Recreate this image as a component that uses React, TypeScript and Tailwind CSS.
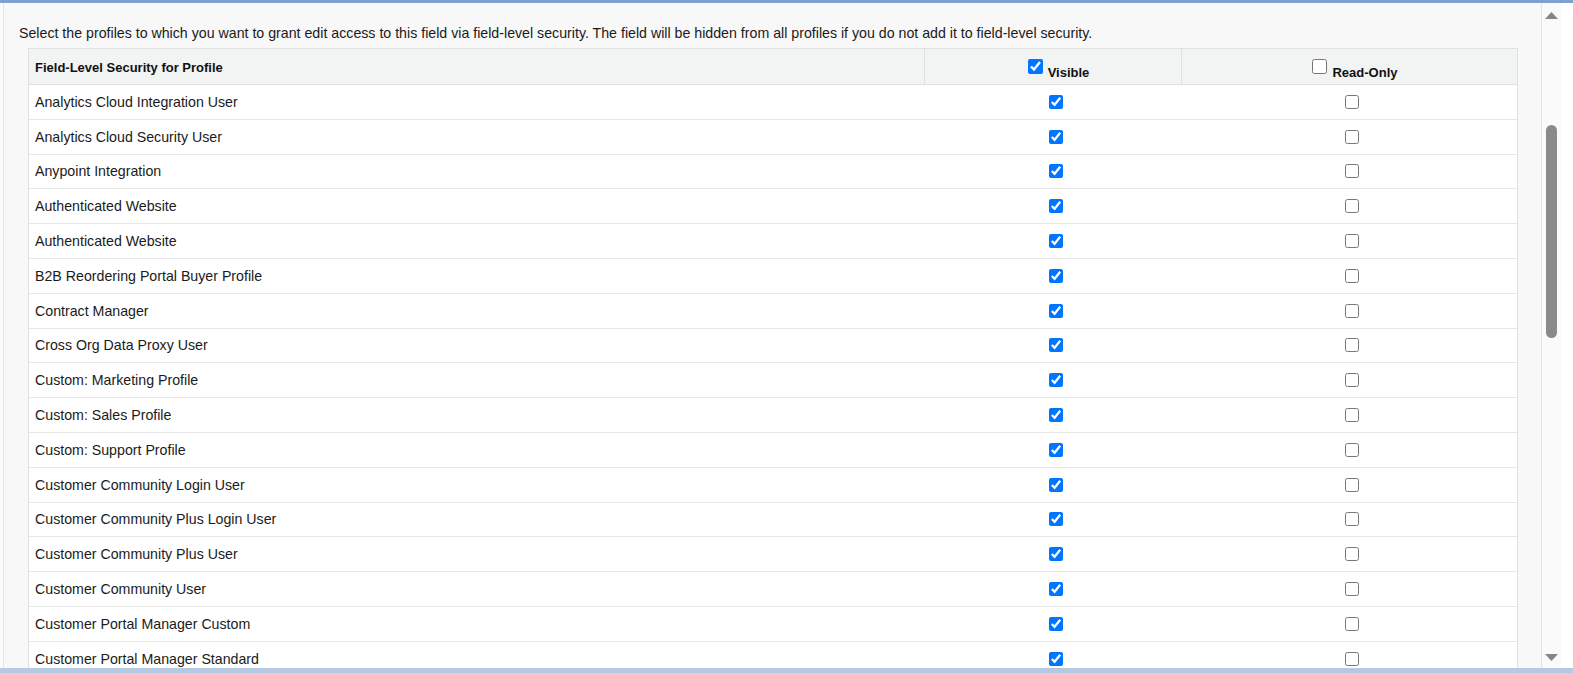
import React from "react";

const profiles = [
  "Analytics Cloud Integration User",
  "Analytics Cloud Security User",
  "Anypoint Integration",
  "Authenticated Website",
  "Authenticated Website",
  "B2B Reordering Portal Buyer Profile",
  "Contract Manager",
  "Cross Org Data Proxy User",
  "Custom: Marketing Profile",
  "Custom: Sales Profile",
  "Custom: Support Profile",
  "Customer Community Login User",
  "Customer Community Plus Login User",
  "Customer Community Plus User",
  "Customer Community User",
  "Customer Portal Manager Custom",
  "Customer Portal Manager Standard",
];

export default function App() {
  return (
    <div
      className="w-[1573px] h-[673px] bg-white flex flex-col overflow-hidden"
      style={{ fontFamily: '"Liberation Sans", Arial, sans-serif' }}
    >
      <div className="h-[3px] bg-[#7ea2cd] shrink-0" />
      <div className="flex flex-1 min-h-0">
        <div className="w-[3px] bg-[#fbfbfb] shrink-0" />
        <div className="flex-1 min-w-0 bg-[#f8f8f8] border-l border-r border-[#e4e4e4] overflow-hidden pt-[22px] pl-[15px] pr-[23px]">
          <p className="text-[14.2px] leading-[16px] text-[#1b1b1b] m-0 whitespace-nowrap">
            Select the profiles to which you want to grant edit access to this field via field-level security. The field will be hidden from all profiles if you do not add it to field-level security.
          </p>
          <div className="ml-[9px] mt-[7px] border border-[#e0e0e0] bg-white">
            <div className="flex h-[36px] bg-[#f2f3f3] border-b border-[#e0e0e0] text-[13px] font-bold text-[#111]">
              <div className="w-[896px] flex items-center pl-[6px] border-r border-[#e0e0e0] pt-[2px]">
                Field-Level Security for Profile
              </div>
              <div className="w-[257px] flex items-center justify-center border-r border-[#e0e0e0] pl-[11px]">
                <input type="checkbox" checked readOnly className="m-0 mr-[5px] w-[15px] h-[15px] -mt-[1px]" />
                <span className="mt-[12px]">Visible</span>
              </div>
              <div className="flex-1 flex items-center justify-center pl-[11px]">
                <input type="checkbox" readOnly className="m-0 mr-[5px] w-[15px] h-[15px] -mt-[1px]" />
                <span className="mt-[12px]">Read-Only</span>
              </div>
            </div>
            {profiles.map((p, i) => (
              <div key={i} className="flex h-[34.8px] border-b border-[#e8e8e8] text-[14.2px] text-[#1b1b1b]">
                <div className="w-[896px] flex items-center pl-[6px] pt-[1px]">{p}</div>
                <div className="w-[257px] flex items-center justify-center">
                  <input type="checkbox" checked readOnly className="m-0 ml-[4px] w-[14px] h-[14px]" />
                </div>
                <div className="flex-1 flex items-center justify-center">
                  <input type="checkbox" readOnly className="m-0 ml-[4px] w-[14px] h-[14px]" />
                </div>
              </div>
            ))}
          </div>
        </div>
        <div className="w-[19px] bg-[#fafafa] shrink-0 flex flex-col items-center relative">
          <svg width="13" height="7" viewBox="0 0 13 7" className="mt-[9px]">
            <polygon points="6.5,0 13,7 0,7" fill="#858585" />
          </svg>
          <div className="w-[11px] h-[213px] rounded-full bg-[#8a8a8a] mt-[106px]" />
          <div className="flex-1" />
          <svg width="13" height="7" viewBox="0 0 13 7" className="mb-[7px]">
            <polygon points="0,0 13,0 6.5,7" fill="#858585" />
          </svg>
        </div>
        <div className="w-[12px] bg-white shrink-0" />
      </div>
      <div className="h-[5px] bg-[#b5c9e2] shrink-0" />
    </div>
  );
}
